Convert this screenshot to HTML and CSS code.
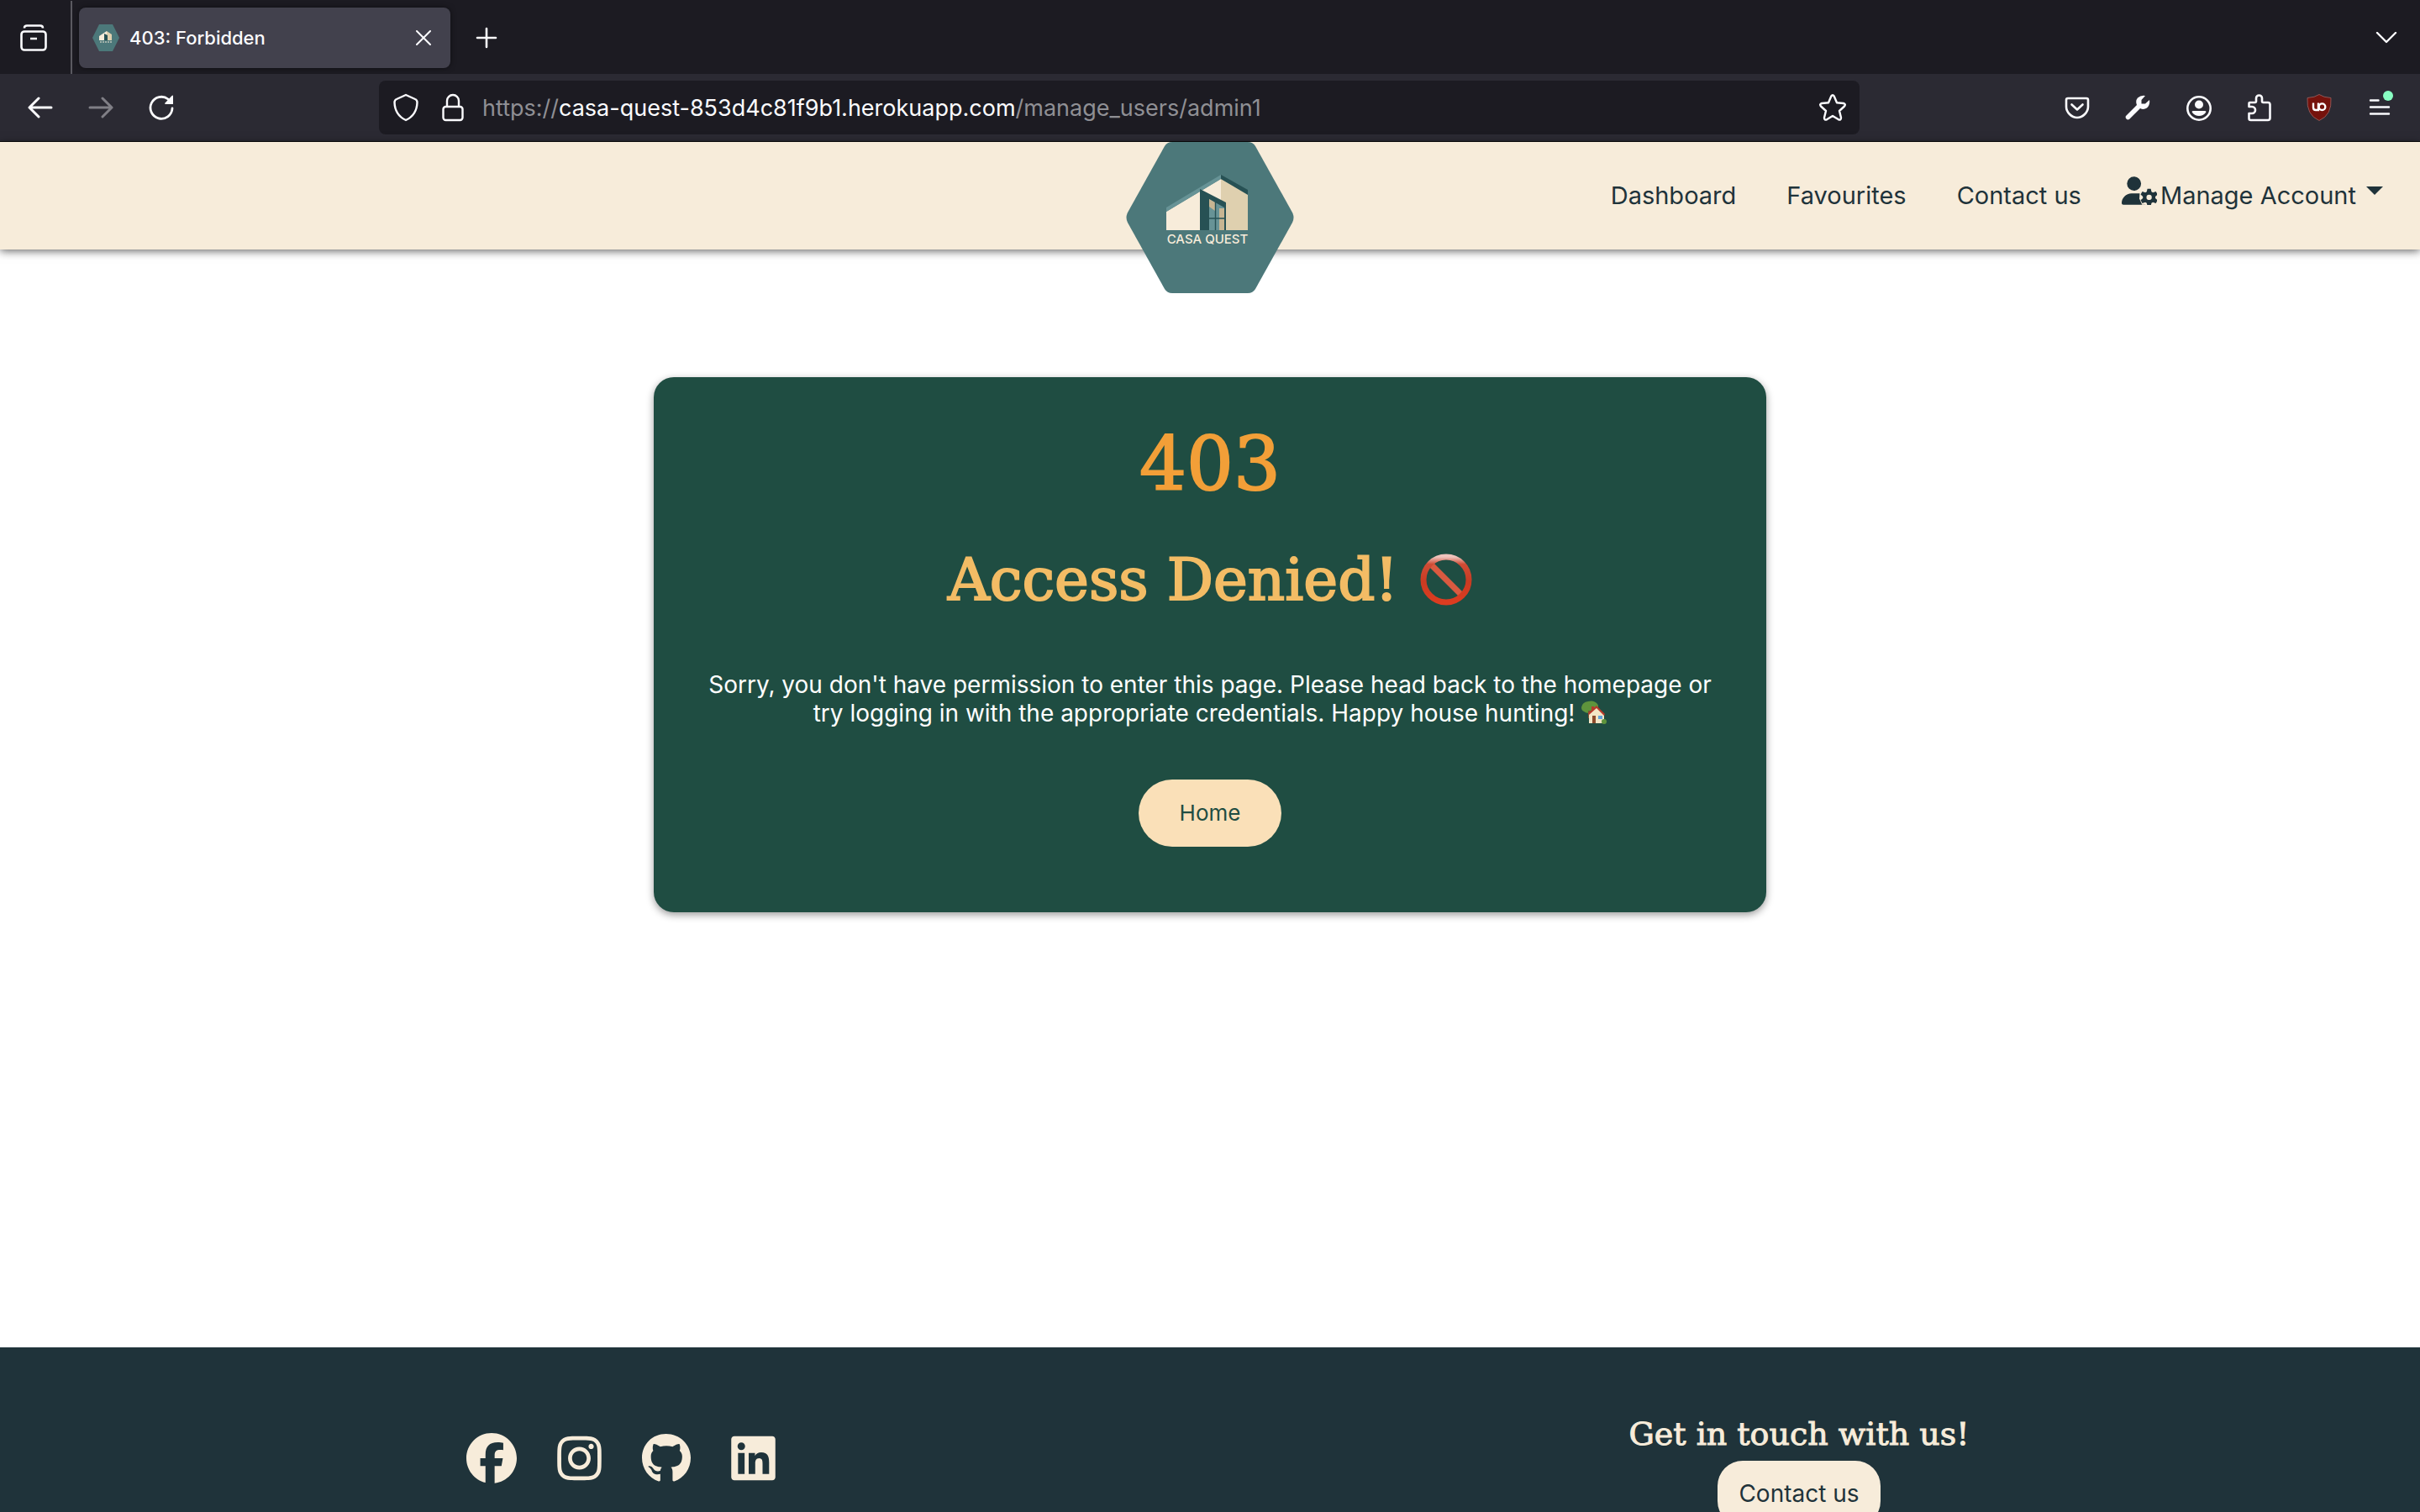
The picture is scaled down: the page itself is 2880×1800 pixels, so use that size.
FILE: index.html
```html
<!DOCTYPE html>
<html lang="en">
<head>
<meta charset="utf-8">
<meta name="viewport" content="width=device-width, initial-scale=1">
<title>403: Forbidden</title>
<link rel="stylesheet" href="styles.css">
</head>
<body>
<svg class="defs" aria-hidden="true">
  <symbol id="hex-logo" viewBox="0 0 200 180">
    <path fill="#4c787a" d="M55 0H145Q151 0 154 5L198 84Q201 90 198 96L154 175Q151 180 145 180H55Q49 180 46 175L2 96Q-1 90 2 84L46 5Q49 0 55 0Z"/>
    <path fill="#f7ecda" d="M48 83L113 44V105H48Z"/>
    <path fill="#dfd0af" d="M113 44L145 62V105H113Z"/>
    <path fill="#679396" d="M48 78L113 39V44L48 83Z"/>
    <path fill="#275154" d="M113 39L145 57V63L113 44Z"/>
    <path fill="#275154" d="M88 56L119 72V105H88Z"/>
    <path fill="#679396" d="M99 68L117 78V105H99Z"/>
    <path fill="#c7b592" d="M99 68L106 72V82L99 77ZM111 79H117V105H111Z"/>
    <path stroke="#275154" stroke-width="1.4" fill="none" d="M106.500 70V105M99 91H118"/>
  </symbol>
</svg>

<div class="tabs">
  <button class="icon-btn view-btn" aria-label="Recent browsing"><svg viewBox="0 0 32 32" width="32" height="32" fill="none" stroke="#fbfbfe" stroke-width="2.600"><rect x="1.500" y="8.500" width="29" height="22" rx="3.500"/><path d="M5 4.500Q5 1.500 8 1.500H24Q27 1.500 27 4.500M12 17H20"/></svg></button>
  <div class="tab">
    <svg width="32" height="32" viewBox="0 0 32 32" aria-hidden="true"><path fill="#4c787a" d="M8 0H24L32 16L24 32H8L0 16Z"/><path fill="#f7ecda" d="M8 14L17 8V19H8Z"/><path fill="#dfd0af" d="M17 8L23 12V19H17Z"/><path fill="#275154" d="M14 11L18 13V19H14Z"/><path stroke="#f7ecda" stroke-dasharray="2 1" d="M9 21H23"/></svg>
    <span class="tab-title">403: Forbidden</span>
    <button class="icon-btn" aria-label="Close tab"><svg width="18" height="18" viewBox="0 0 18 18" fill="none" stroke="#fbfbfe" stroke-width="2" stroke-linecap="round"><path d="M1 1L17 17M17 1L1 17"/></svg></button>
  </div>
  <button class="icon-btn" aria-label="New tab"><svg width="26" height="26" viewBox="0 0 26 26" stroke="#fbfbfe" stroke-width="2.600" stroke-linecap="round"><path d="M13 2V24M2 13H24"/></svg></button>
  <button class="icon-btn list-btn" aria-label="List all tabs"><svg width="26" height="14" viewBox="0 0 26 14" fill="none" stroke="#fbfbfe" stroke-width="2.400" stroke-linecap="round" stroke-linejoin="round"><path d="M2 1L13 12L24 1"/></svg></button>
</div>

<div class="toolbar">
  <div class="history">
    <button class="icon-btn" aria-label="Back"><svg width="30" height="26" viewBox="0 0 30 26" fill="none" stroke="#fbfbfe" stroke-width="3" stroke-linecap="round" stroke-linejoin="round"><path d="M13 2L2 13L13 24M2 13H28"/></svg></button>
    <button class="icon-btn" aria-label="Forward" disabled><svg width="30" height="26" viewBox="0 0 30 26" fill="none" stroke="#807f86" stroke-width="3" stroke-linecap="round" stroke-linejoin="round"><path d="M17 2L28 13L17 24M2 13H28"/></svg></button>
    <button class="icon-btn" aria-label="Reload"><svg width="30" height="30" viewBox="0 0 30 30" fill="none" stroke="#fbfbfe" stroke-width="2.800" stroke-linecap="round"><path d="M28 16A13 13 0 1 1 23 5L26 8"/><path fill="#fbfbfe" stroke="none" d="M29 1V11H20Q18.500 11 19.500 9.500L27.500 1Q29 0 29 1Z"/></svg></button>
  </div>
  <div class="urlbar">
    <svg width="30" height="34" viewBox="0 0 30 34" fill="none" stroke="#fbfbfe" stroke-width="2.400" stroke-linejoin="round"><path d="M15 2L26 7Q28.500 8 28.500 11Q28 26 15 32Q2 26 1.500 11Q1.500 8 4 7Z"/></svg>
    <svg width="26" height="34" viewBox="0 0 26 34" fill="none" stroke="#fbfbfe" stroke-width="2.400"><rect x="1.500" y="16" width="23" height="16" rx="3"/><path d="M6 16V9A7 7 0 0 1 20 9V16"/></svg>
    <span class="url">https://<b>casa-quest-853d4c81f9b1.herokuapp.com</b>/manage_users/admin1</span>
    <button class="icon-btn" aria-label="Bookmark this page"><svg width="32" height="32" viewBox="0 0 32 32" fill="none" stroke="#fbfbfe" stroke-width="2.400" stroke-linejoin="round"><path d="M14.300 2.500Q16 0 17.700 2.500L21 10.200L29 11Q32 12 30 14.500L24 20L26 28Q26 31.500 23 30.300L16 26L9 30.300Q6 31.500 6 28L8 20L2 14.500Q0 12 3 11L11 10.200Z"/></svg></button>
  </div>
  <div class="actions">
    <button class="icon-btn" aria-label="Save to Pocket"><svg width="32" height="32" viewBox="0 0 32 32" fill="none" stroke="#fbfbfe" stroke-width="2.600" stroke-linecap="round" stroke-linejoin="round"><path d="M5 5H27Q29 5 29 7V15Q29 20 25 24Q21 28 16 28Q11 28 7 24Q3 20 3 15V7Q3 5 5 5Z"/><path d="M9.500 12.500L16 18.500L22.500 12.500"/></svg></button>
    <button class="icon-btn" aria-label="Developer tools"><svg width="32" height="32" viewBox="0 0 32 32"><path fill="#fbfbfe" d="M25 2L20.500 7V11.500H25L30 7Q31 13 27 16.500Q23 19 19 17L6 30Q4 31 2.500 29.500Q1 28 2 26L15 13Q13 8 16 4.500Q20 1 25 2Z"/></svg></button>
    <button class="icon-btn" aria-label="Account"><svg width="32" height="32" viewBox="0 0 32 32"><circle cx="17" cy="17" r="13.700" fill="none" stroke="#fbfbfe" stroke-width="2.600"/><circle cx="17" cy="12.500" r="5" fill="#fbfbfe"/><path fill="#fbfbfe" d="M10 20H24Q26 20 25 22Q22 26 17 26Q12 26 9 22Q8 20 10 20Z"/></svg></button>
    <button class="icon-btn" aria-label="Extensions"><svg width="32" height="32" viewBox="0 0 32 32" fill="none" stroke="#fbfbfe" stroke-width="2.600" stroke-linejoin="round"><path d="M5.500 10H11.500Q13 10 13 8.500V5A3.500 3.500 0 0 1 20 5V8.500Q20 10 21.500 10H27Q29.500 10 29.500 12.500V28.500Q29.500 31 27 31H6.500Q4.500 31 4.500 29V23H8A4 4 0 0 0 8 15H4.500V11Q4.500 10 5.500 10Z"/></svg></button>
    <button class="icon-btn" aria-label="uBlock Origin"><svg width="32" height="32" viewBox="0 0 32 32" fill="none"><path fill="#75120c" stroke="#8e5656" d="M16 .500Q21 4 30 4.500Q31.500 25 16 31.500Q.500 25 2 4.500Q11 4 16 .500Z"/><path stroke="#fff" stroke-width="2.400" d="M9 10.500V16Q9 19 12 19H15V10.500"/><circle cx="19.500" cy="15.200" r="3.800" stroke="#fff" stroke-width="2.400"/></svg></button>
    <button class="icon-btn" aria-label="Open application menu"><svg width="32" height="32" viewBox="0 0 32 32" stroke="#fbfbfe" stroke-width="2.400" stroke-linecap="round"><path d="M5 7.500H14.500M5 15.500H27M5 23.500H27"/><circle cx="26" cy="2" r="6" fill="#88ffc2" stroke="none"/></svg></button>
  </div>
</div>

<header class="site-header">
  <a class="logo" href="#" aria-label="Casa Quest"><svg width="200" height="180"><use href="#hex-logo"/><text x="97" y="121" text-anchor="middle" class="logo-text">CASA QUEST</text></svg></a>
  <nav class="site-nav">
    <a href="#">Dashboard</a>
    <a href="#">Favourites</a>
    <a href="#">Contact us</a>
    <a href="#" class="account"><svg class="user-icon" width="42" height="34" viewBox="0 0 640 512" fill="#1f333a" aria-hidden="true"><path d="M224 256A128 128 0 1 0 224 0a128 128 0 1 0 0 256zm-46 48C80 304 0 383 0 482c0 16 13 30 30 30h388c6 0 11-1 16-4-5-9-9-18-11-28-30-16-38-34-36-58l-20-12c-23-13-29-44-15-68 12-20 26-27 46-24-26-9-52-14-80-14z"/><path fill="#f7ecda" d="M330 250h170v262H370L320 400z"/><path fill-rule="evenodd" d="M466 220h62l12 54 26 15 54-18 31 54-41 37v30l41 37-31 54-54-18-26 15-12 54h-62l-12-54-26-15-54 18-31-54 41-37v-30l-41-37 31-54 54 18 26-15zM497 329a48 48 0 1 0 0 96a48 48 0 1 0 0-96z"/></svg><span>Manage Account</span><span class="caret"></span></a>
  </nav>
</header>

<main class="content">
  <section class="card">
    <h1>403</h1>
    <h2>Access Denied! <svg class="denied" viewBox="0 0 62 62" role="img" aria-label="Prohibited"><defs><linearGradient id="ring" x2="0" y2="1"><stop offset="0" stop-color="#efc4bd"/><stop offset=".16" stop-color="#cf4c35"/><stop offset=".55" stop-color="#c93b22"/><stop offset="1" stop-color="#dc3c20"/></linearGradient></defs><path stroke="#d95a40" stroke-width="7" d="M14 14L48 48"/><circle cx="31" cy="31" r="27" fill="none" stroke="url(#ring)" stroke-width="7"/></svg></h2>
    <p>Sorry, you don't have permission to enter this page. Please head back to the homepage or try logging in with the appropriate credentials. Happy house hunting! <svg class="house" viewBox="0 0 30 28" role="img" aria-label="House with garden"><path fill="#5f943c" d="M0 8Q1 2 8 1Q15-1 19 4Q22 8 17 12L9 15Q5 15 3 13Q0 12 0 8Z"/><path fill="#795434" d="M8 12H11V21H8Z"/><path fill="#f3e6c6" d="M9 16L18 8L27 17V27H9Z"/><path fill="#b8392b" d="M12 7H15V11H12ZM8 15L18 6L28 16L27 18L18 9L9 17Z"/><path fill="#8c4b2b" d="M13 18H17V27H13Z"/><path fill="#64a3d8" d="M20 18H25V22H20Z"/><circle cx="27" cy="25" r="3" fill="#5f943c"/></svg></p>
    <a class="home-btn" href="#">Home</a>
  </section>
</main>

<footer class="site-footer">
  <div class="social">
    <a href="#" aria-label="Facebook"><svg height="60" width="60" viewBox="0 0 512 512"><path d="M512 256C512 114.600 397.400 0 256 0S0 114.600 0 256C0 376 82.700 476.800 194.200 504.500V334.200H141.400V256h52.800V222.300c0-87.100 39.400-127.500 125-127.500c16.200 0 44.200 3.200 55.700 6.400V172c-6-.6-16.500-1-29.600-1c-42 0-58.200 15.900-58.200 57.200V256h83.600l-14.400 78.200H287V510.100C413.800 494.800 512 386.900 512 256z"/></svg></a>
    <a href="#" aria-label="Instagram"><svg height="60" width="53" viewBox="0 0 448 512"><path d="M224.100 141c-63.600 0-114.900 51.300-114.900 114.900s51.300 114.900 114.900 114.900S339 319.500 339 255.900 287.700 141 224.100 141zm0 189.600c-41.100 0-74.700-33.500-74.700-74.700s33.500-74.700 74.700-74.700 74.700 33.500 74.700 74.700-33.600 74.700-74.700 74.700zm146.400-194.300c0 14.900-12 26.800-26.800 26.800-14.900 0-26.800-12-26.800-26.800s12-26.800 26.800-26.800 26.800 12 26.800 26.800zm76.100 27.200c-1.700-35.900-9.900-67.700-36.200-93.900-26.200-26.200-58-34.400-93.900-36.200-37-2.100-147.900-2.100-184.900 0-35.800 1.700-67.600 9.900-93.900 36.100s-34.400 58-36.200 93.900c-2.100 37-2.100 147.900 0 184.900 1.700 35.900 9.900 67.700 36.200 93.900s58 34.400 93.900 36.200c37 2.100 147.900 2.100 184.900 0 35.900-1.700 67.700-9.900 93.900-36.200 26.200-26.200 34.400-58 36.200-93.900 2.100-37 2.100-147.800 0-184.800zM398.800 388c-7.800 19.600-22.900 34.700-42.600 42.600-29.500 11.700-99.500 9-132.100 9s-102.700 2.600-132.100-9c-19.600-7.800-34.700-22.900-42.600-42.600-11.700-29.500-9-99.500-9-132.100s-2.600-102.700 9-132.100c7.800-19.600 22.900-34.700 42.600-42.600 29.500-11.700 99.500-9 132.100-9s102.700-2.600 132.100 9c19.600 7.800 34.700 22.900 42.600 42.600 11.700 29.500 9 99.500 9 132.100s2.700 102.700-9 132.100z"/></svg></a>
    <a href="#" aria-label="GitHub"><svg height="60" width="58" viewBox="0 0 496 512"><path d="M244.800 8C106.100 8 0 113.300 0 252c0 110.900 69.800 205.800 169.500 239.200 12.800 2.300 17.300-5.600 17.300-12.100v-61.700c-70 15-84.700-29.800-84.700-29.800-11.400-29.100-27.800-36.600-27.800-36.600-22.900-15.700 1.600-15.400 1.600-15.400 25.300 2 39.200 26.200 39.200 26.200 22.500 38.600 58.700 26.100 72.300 20 2.300-16.300 8.200-27.400 16-33.700-55.900-6.200-112.300-14.300-112.300-110.500 0-27.500 7.600-41.300 23.600-58.900-2.600-6.500-11.100-33.300 2.600-67.900 20.900-6.500 69 27 69 27 20-5.600 41.500-8.500 62.800-8.500s42.800 2.900 62.800 8.500c0 0 48.100-33.600 69-27 13.700 34.700 5.200 61.400 2.600 67.900 16 17.700 25.800 31.500 25.800 58.900 0 96.500-58.900 104.200-114.800 110.500 9.200 7.900 17 22.900 17 46.400v84.600c0 6.500 4.600 14.400 17.300 12.100C428.200 457.800 496 362.900 496 252 496 113.300 383.500 8 244.800 8z"/></svg></a>
    <a href="#" aria-label="LinkedIn"><svg height="60" width="53" viewBox="0 0 448 512"><path d="M416 32H31.900C14.300 32 0 46.500 0 64.300v383.400C0 465.500 14.300 480 31.900 480H416c17.600 0 32-14.500 32-32.300V64.300c0-17.800-14.400-32.300-32-32.300zM135.400 416H69V202.200h66.500V416zm-33.200-243c-21.300 0-38.500-17.300-38.500-38.500S80.900 96 102.200 96c21.200 0 38.500 17.300 38.500 38.500 0 21.300-17.200 38.500-38.500 38.500zm282.100 243h-66.400V312c0-24.800-.5-56.700-34.500-56.700-34.600 0-39.900 27-39.900 54.900V416h-66.400V202.200h63.700v29.200h.9c8.900-16.800 30.600-34.500 62.900-34.500 67.200 0 79.700 44.300 79.700 101.900V416z"/></svg></a>
  </div>
  <div class="touch">
    <h3>Get in touch with us!</h3>
    <a class="contact-btn" href="#">Contact us</a>
  </div>
</footer>
</body>
</html>
```
FILE: styles.css
```css
* { box-sizing: border-box; }
body {
  margin: 0;
  height: 100vh;
  display: flex;
  flex-direction: column;
  overflow: hidden;
  background: #fff;
  color: #1f333a;
  font-family: Inter, "Liberation Sans", sans-serif;
}
svg { display: block; flex: none; }
a { color: inherit; text-decoration: none; }
h1, h2, h3, p { margin: 0; }
h1, h2, h3 { font-family: "DejaVu Serif", serif; font-weight: 400; }
h1, h2 { -webkit-text-stroke: 2px currentColor; }
h3 { -webkit-text-stroke: 1px currentColor; }
.defs { position: absolute; width: 0; height: 0; }
.icon-btn { display: flex; padding: 0; border: 0; background: none; }

/* Browser tab strip */
.tabs {
  flex: none;
  display: flex;
  align-items: center;
  height: 88px;
  padding: 1px 27px 0 0;
  background: #1c1b22;
}
.view-btn {
  align-self: stretch;
  align-items: center;
  width: 86px;
  padding-left: 24px;
  border-right: 2px solid #5a5960;
}
.tab {
  display: flex;
  align-items: center;
  gap: 12px;
  width: 442px;
  height: 72px;
  margin: 0 30px 0 8px;
  padding: 0 23px 0 16px;
  border-radius: 8px;
  background: #42414d;
  box-shadow: 0 0 6px rgba(0, 0, 0, .5);
}
.tab-title { flex: 1; color: #fbfbfe; font-size: 22px; font-weight: 500; }
.list-btn { margin-left: auto; }

/* Browser toolbar */
.toolbar {
  flex: none;
  display: flex;
  align-items: center;
  height: 81px;
  padding: 0 32px 0 33px;
  border-bottom: 1px solid #0c0c0d;
  background: #2b2a33;
}
.history { display: flex; align-items: center; gap: 42px; width: 418px; }
.urlbar {
  flex: 1;
  display: flex;
  align-items: center;
  gap: 28px;
  height: 64px;
  padding: 0 16px 0 17px;
  border-radius: 8px;
  background: #1c1b22;
}
.url { flex: 1; margin-left: -6px; color: #8f8f94; font-size: 27px; }
.url b { color: #fbfbfe; font-weight: 400; }
.actions { display: flex; gap: 40px; margin-left: 243px; }
.actions svg { overflow: visible; }

/* Site header */
.site-header {
  position: relative;
  flex: none;
  display: flex;
  justify-content: flex-end;
  height: 128px;
  padding: 0 44px 2px;
  background: #f7ecda;
  box-shadow: 0 2px 10px rgba(0, 0, 0, .6);
}
.logo { position: absolute; top: 0; left: 50%; margin-left: -100px; }
.logo-text { fill: #f7ecda; font-size: 15px; font-weight: 500; }
.site-nav { display: flex; align-items: center; gap: 60px; font-size: 29px; }
.account { display: flex; align-items: center; gap: 4px; margin-left: -12px; }
.user-icon { margin-bottom: 10px; }
.caret { margin: 0 0 10px 8px; border: 10px solid transparent; border-top-color: #1f333a; border-bottom: 0; }

/* Error card */
.content { flex: 1; padding: 152px 0 0; }
.card {
  display: flex;
  flex-direction: column;
  align-items: center;
  width: 46%;
  margin: 0 auto;
  padding: 49px 64px 78px;
  border-radius: 24px;
  background: #1f4d42;
  color: #fff;
  text-align: center;
  box-shadow: 0 3px 10px rgba(0, 0, 0, .4);
}
.card h1 { color: #f29f38; font-size: 88px; line-height: 110px; }
.card h2 { display: flex; align-items: center; gap: 26px; margin-top: 36px; color: #f3bc65; font-size: 69px; line-height: 92px; }
.denied { width: 62px; height: 62px; }
.card p { margin-top: 62px; font-size: 28px; line-height: 34px; }
.house { display: inline-block; width: 30px; height: 28px; vertical-align: -3px; }
.home-btn {
  margin-top: 62px;
  padding: 0 49px;
  border-radius: 40px;
  background: #fae0b8;
  color: #1f4d42;
  font-size: 26px;
  line-height: 80px;
}

/* Footer */
.site-footer {
  flex: none;
  display: grid;
  grid-template-columns: 1fr 1fr;
  height: 196px;
  padding: 76px 38px 0;
  overflow: hidden;
  background: #1f333a;
  color: #f7ecda;
}
.social { display: flex; justify-content: center; gap: 48px; padding-top: 26px; fill: currentColor; }
.touch { display: flex; flex-direction: column; align-items: center; }
.touch h3 { margin-bottom: 4px; font-size: 38px; line-height: 55px; }
.contact-btn {
  padding: 0 25px;
  border-radius: 30px;
  background: #f7ecda;
  color: #1f333a;
  font-size: 28px;
  line-height: 78px;
}
```
